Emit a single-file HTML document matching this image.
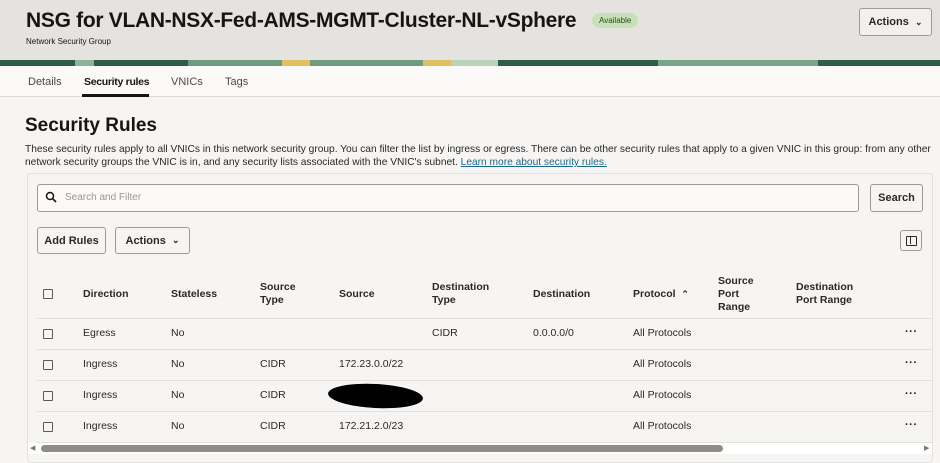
<!DOCTYPE html>
<html><head><meta charset="utf-8"><style>
*{box-sizing:border-box;margin:0;padding:0}
body{width:940px;height:463px;overflow:hidden;background:#f6f5f3;font-family:"Liberation Sans",sans-serif;color:#161513;position:relative}
.hdr{position:absolute;left:0;top:0;width:940px;height:60px;background:#e5e3e0}
.strip{position:absolute;left:0;top:60px;width:940px;height:6px;background:linear-gradient(90deg,#2f5c45 0 8%,#8fb39a 8% 10%,#2f5c45 10% 20%,#6f9c80 20% 30%,#e0c060 30% 33%,#6f9c80 33% 45%,#e0c060 45% 48%,#b8d4b8 48% 53%,#2f5c45 53% 70%,#7aa58a 70% 87%,#2f5c45 87% 100%)}
.abs{position:absolute;white-space:nowrap}
h1{position:absolute;left:26px;top:9px;font-size:21px;font-weight:bold;letter-spacing:-0.3px;white-space:nowrap}
.tabs{position:absolute;top:66px;left:0;width:940px;height:31px;background:#fbfaf9;border-bottom:1px solid #dcdad7}
.btn{position:absolute;border:1px solid #9e9b97;border-radius:3px;background:#f6f5f3;font-size:11px;font-weight:bold;display:flex;align-items:center;justify-content:center;color:#2b2926}
.panel{position:absolute;left:27px;top:173px;width:906px;height:290px;border:1px solid #e4e2df;border-radius:4px;background:#f6f5f3}
.th{position:absolute;font-size:10.5px;font-weight:bold;line-height:13px;color:#2b2926}
.td{position:absolute;font-size:10.5px;color:#2b2926;white-space:nowrap}
.cb{position:absolute;left:43px;width:10px;height:10px;border:1px solid #5f5c58;border-radius:1px}
.line{position:absolute;left:37px;width:895px;height:1px;background:#e2e0dd}
.dots{position:absolute;left:905px;font-size:11px;font-weight:bold;letter-spacing:0.5px}
</style></head><body>
<div class="hdr"></div>
<h1>NSG for VLAN-NSX-Fed-AMS-MGMT-Cluster-NL-vSphere</h1>
<div class="abs" style="left:592px;top:13px;height:15px;padding:0 7px;background:#c7e0b5;border-radius:8px;font-size:8px;line-height:15px;color:#2e4a25">Available</div>
<div class="abs" style="left:26px;top:37px;font-size:8px">Network Security Group</div>
<div class="btn" style="left:859px;top:8px;width:73px;height:28px;background:#f1f0ee">Actions&nbsp;&nbsp;<span style="font-size:9px">&#8964;</span></div>
<div class="strip"></div>
<div class="tabs"></div>
<div class="abs" style="left:28px;top:76px;font-size:11px;color:#4a4744">Details</div>
<div class="abs" style="left:84px;top:76px;font-size:10.5px;font-weight:bold;letter-spacing:-0.3px">Security rules</div>
<div class="abs" style="left:82px;top:94px;width:67px;height:3px;background:#161513"></div>
<div class="abs" style="left:171px;top:76px;font-size:11px;color:#4a4744">VNICs</div>
<div class="abs" style="left:225px;top:76px;font-size:11px;color:#4a4744">Tags</div>
<div class="abs" style="left:25px;top:115px;font-size:19px;font-weight:bold">Security Rules</div>
<div class="abs" style="left:25px;top:143px;font-size:10.2px;line-height:13px;color:#2b2926">These security rules apply to all VNICs in this network security group. You can filter the list by ingress or egress. There can be other security rules that apply to a given VNIC in this group: from any other<br>network security groups the VNIC is in, and any security lists associated with the VNIC's subnet. <span style="color:#1c6a8a;text-decoration:underline">Learn more about security rules.</span></div>
<div class="panel"></div>
<div class="abs" style="left:37px;top:184px;width:822px;height:28px;border:1px solid #9e9b97;border-radius:3px;background:#fbfaf9"></div>
<svg class="abs" style="left:45px;top:191px" width="12" height="12" viewBox="0 0 12 12"><circle cx="5" cy="5" r="3.5" fill="none" stroke="#161513" stroke-width="1.5"/><path d="M7.5 7.5L11 11" stroke="#161513" stroke-width="1.6"/></svg>
<div class="abs" style="left:65px;top:192px;font-size:10px;color:#9a9793">Search and Filter</div>
<div class="btn" style="left:870px;top:184px;width:53px;height:28px">Search</div>
<div class="btn" style="left:37px;top:227px;width:69px;height:27px">Add Rules</div>
<div class="btn" style="left:115px;top:227px;width:75px;height:27px">Actions&nbsp;&nbsp;<span style="font-size:9px">&#8964;</span></div>
<div class="btn" style="left:900px;top:230px;width:22px;height:21px"><div style="width:11px;height:10px;border:1.5px solid #2b2926;border-radius:1px;position:relative"><div style="position:absolute;left:3px;top:0;width:1.5px;height:7px;background:#2b2926"></div></div></div>
<div class="cb" style="top:289px"></div>
<div class="th" style="left:83px;top:288px">Direction</div>
<div class="th" style="left:171px;top:288px">Stateless</div>
<div class="th" style="left:260px;top:281px">Source<br>Type</div>
<div class="th" style="left:339px;top:288px">Source</div>
<div class="th" style="left:432px;top:281px">Destination<br>Type</div>
<div class="th" style="left:533px;top:288px">Destination</div>
<div class="th" style="left:633px;top:288px">Protocol &nbsp;<span style="font-size:9px">&#8963;</span></div>
<div class="th" style="left:718px;top:275px">Source<br>Port<br>Range</div>
<div class="th" style="left:796px;top:281px">Destination<br>Port Range</div>
<div class="line" style="top:318px"></div>
<div class="line" style="top:349px"></div>
<div class="line" style="top:380px"></div>
<div class="line" style="top:411px"></div>
<div class="line" style="top:442px"></div>

<div class="cb" style="top:329px"></div><div class="td" style="left:83px;top:327px">Egress</div><div class="td" style="left:171px;top:327px">No</div><div class="td" style="left:432px;top:327px">CIDR</div><div class="td" style="left:533px;top:327px">0.0.0.0/0</div><div class="td" style="left:633px;top:327px">All Protocols</div><div class="dots" style="top:326px">···</div>
<div class="cb" style="top:360px"></div><div class="td" style="left:83px;top:358px">Ingress</div><div class="td" style="left:171px;top:358px">No</div><div class="td" style="left:260px;top:358px">CIDR</div><div class="td" style="left:339px;top:358px">172.23.0.0/22</div><div class="td" style="left:633px;top:358px">All Protocols</div><div class="dots" style="top:357px">···</div>
<div class="cb" style="top:391px"></div><div class="td" style="left:83px;top:389px">Ingress</div><div class="td" style="left:171px;top:389px">No</div><div class="td" style="left:260px;top:389px">CIDR</div><div class="abs" style="left:328px;top:384px;width:95px;height:24px;background:#000;border-radius:50%;transform:rotate(3deg)"></div><div class="td" style="left:633px;top:389px">All Protocols</div><div class="dots" style="top:388px">···</div>
<div class="cb" style="top:422px"></div><div class="td" style="left:83px;top:420px">Ingress</div><div class="td" style="left:171px;top:420px">No</div><div class="td" style="left:260px;top:420px">CIDR</div><div class="td" style="left:339px;top:420px">172.21.2.0/23</div><div class="td" style="left:633px;top:420px">All Protocols</div><div class="dots" style="top:419px">···</div>
<div class="abs" style="left:28px;top:443px;width:904px;height:11px;background:#fff"></div>
<div class="abs" style="left:41px;top:445px;width:682px;height:7px;background:#8e8c89;border-radius:4px"></div>
<div class="abs" style="left:30px;top:444px;font-size:7px;color:#777">◀</div>
<div class="abs" style="left:924px;top:444px;font-size:7px;color:#777">▶</div>
</body></html>
